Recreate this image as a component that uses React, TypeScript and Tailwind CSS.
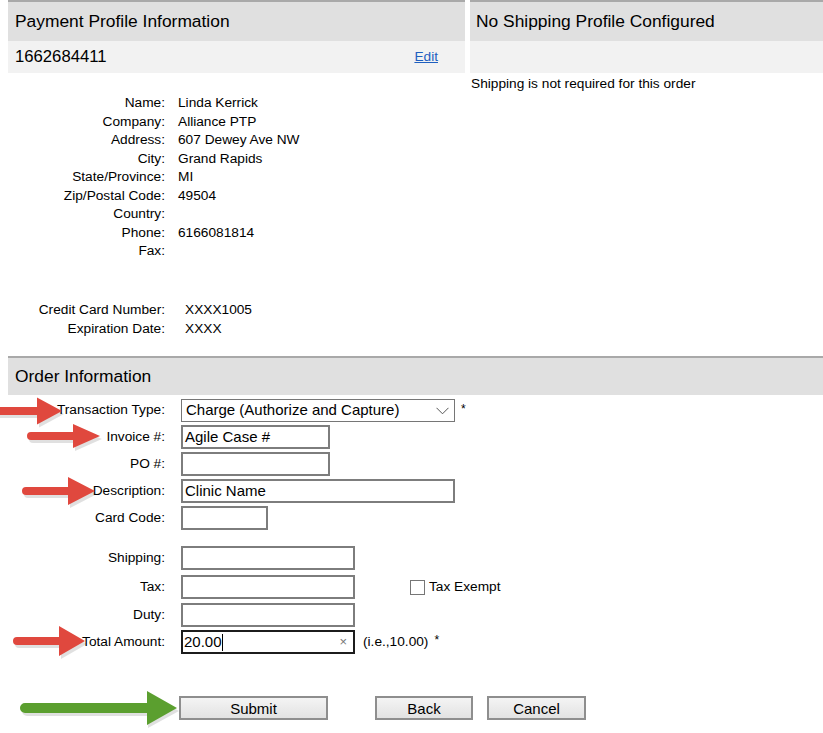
import React from "react";

const profile = [
  ["Name:", "Linda Kerrick"],
  ["Company:", "Alliance PTP"],
  ["Address:", "607 Dewey Ave NW"],
  ["City:", "Grand Rapids"],
  ["State/Province:", "MI"],
  ["Zip/Postal Code:", "49504"],
  ["Country:", ""],
  ["Phone:", "6166081814"],
  ["Fax:", ""],
];

const card = [
  ["Credit Card Number:", "XXXX1005"],
  ["Expiration Date:", "XXXX"],
];

// annotation arrows drawn on top of the screenshot
function arrowPath(x0: number, x1: number, y: number, shaft: number, headLen: number, headH: number) {
  const s = shaft / 2;
  const hx = x1 - headLen;
  return `M${x0 + s} ${y - s} L${hx} ${y - s} L${hx} ${y - headH / 2} L${x1} ${y} L${hx} ${y + headH / 2} L${hx} ${y + s} L${x0 + s} ${y + s} A${s} ${s} 0 0 1 ${x0 + s} ${y - s} Z`;
}

const redArrows = [
  { x0: -6, x1: 62, y: 411, shaft: 8, headLen: 25, headH: 27 },
  { x0: 27, x1: 100, y: 436, shaft: 8, headLen: 27, headH: 24 },
  { x0: 22, x1: 95, y: 491, shaft: 8, headLen: 27, headH: 28 },
  { x0: 13, x1: 85, y: 641, shaft: 8, headLen: 26, headH: 30 },
];

function Arrows() {
  return (
    <svg className="absolute inset-0 pointer-events-none" width={823} height={733}>
      {redArrows.map((a, i) => (
        <g key={i}>
          <path d={arrowPath(a.x0 + 2, a.x1 + 2, a.y + 3, a.shaft, a.headLen, a.headH)} fill="#000" opacity={0.12} />
          <path d={arrowPath(a.x0, a.x1, a.y, a.shaft, a.headLen, a.headH)} fill="#e0483e" />
        </g>
      ))}
      <path d={arrowPath(22, 179, 711, 10, 31, 34)} fill="#000" opacity={0.12} />
      <path d={arrowPath(20, 177, 708, 10, 30, 34)} fill="#5b9f2f" />
    </svg>
  );
}

function Field({ w, value }: { w: string; value?: string }) {
  return (
    <div className={`${w} h-[24px] border-2 border-[#7d7d7d] bg-white flex items-center px-[2px] text-[15px]`}>
      {value}
    </div>
  );
}

function Row({ label, mt, children }: { label: string; mt: string; children: React.ReactNode }) {
  return (
    <div className={`flex items-center ${mt}`}>
      <div className="w-[158px] text-right text-[13.7px] pr-[1px]">{label}</div>
      <div className="ml-[15px] flex items-center">{children}</div>
    </div>
  );
}

function Btn({ w, label }: { w: string; label: string }) {
  return (
    <button className={`${w} h-[24px] border-2 border-[#8e8e8e] bg-gradient-to-b from-[#f4f4f4] to-[#e2e2e2] text-[15px] leading-none`}>
      {label}
    </button>
  );
}

export default function App() {
  return (
    <div className="relative w-[823px] h-[733px] overflow-hidden bg-white text-black font-['Liberation_Sans',Arial,sans-serif] pl-2">
      <div className="flex gap-[5px]">
        <div className="w-[457px] border-t-2 border-[#a9a9a9]">
          <div className="h-[39px] bg-[#e0e0e0] flex items-center pl-[7px] text-[17.4px]">
            Payment Profile Information
          </div>
          <div className="h-[32px] bg-[#f2f2f2] flex items-center justify-between pl-[7px] pr-[27px]">
            <span className="text-[16.7px]">1662684411</span>
            <a href="#" className="text-[13.7px] text-[#1f5fbf] underline">Edit</a>
          </div>
          <div className="mt-[21px] grid grid-cols-[157px_1fr] gap-x-[13px] text-[13.7px] leading-[18.5px]">
            {profile.map(([k, v]) => (
              <React.Fragment key={k}>
                <div className="text-right">{k}</div>
                <div>{v}</div>
              </React.Fragment>
            ))}
          </div>
          <div className="mt-[39px] grid grid-cols-[157px_1fr] gap-x-[20px] text-[13.7px] leading-[19px]">
            {card.map(([k, v]) => (
              <React.Fragment key={k}>
                <div className="text-right">{k}</div>
                <div>{v}</div>
              </React.Fragment>
            ))}
          </div>
        </div>
        <div className="flex-1 border-t-2 border-[#a9a9a9]">
          <div className="h-[39px] bg-[#e0e0e0] flex items-center pl-[6px] text-[17.4px]">
            No Shipping Profile Configured
          </div>
          <div className="h-[32px] bg-[#f2f2f2]" />
          <p className="pl-[1px] mt-[2px] text-[13.7px] leading-[18px]">Shipping is not required for this order</p>
        </div>
      </div>

      <div className="mt-[18.5px] border-t-2 border-[#a9a9a9]">
        <div className="h-[37px] bg-[#e0e0e0] flex items-center pl-[7px] text-[17.4px]">Order Information</div>
      </div>

      <div className="mt-[4px]">
        <Row label="Transaction Type:" mt="mt-0">
          <div className="w-[274px] h-[23px] border border-[#767676] bg-white flex items-center pl-[4px] pr-[4px] text-[15px]">
            <span>Charge (Authorize and Capture)</span>
            <svg className="ml-auto mr-[1px]" width="13" height="8" viewBox="0 0 13 8">
              <path d="M0.5 0.8 L6.5 6.8 L12.5 0.8" fill="none" stroke="#555" strokeWidth="1" />
            </svg>
          </div>
          <span className="ml-[6px] text-[12px] -mt-[4px]">*</span>
        </Row>
        <Row label="Invoice #:" mt="mt-[3px]">
          <Field w="w-[149px]" value="Agile Case #" />
        </Row>
        <Row label="PO #:" mt="mt-[3px]">
          <Field w="w-[149px]" />
        </Row>
        <Row label="Description:" mt="mt-[3px]">
          <Field w="w-[274px]" value="Clinic Name" />
        </Row>
        <Row label="Card Code:" mt="mt-[3px]">
          <Field w="w-[87px]" />
        </Row>
        <Row label="Shipping:" mt="mt-[16px]">
          <Field w="w-[174px]" />
        </Row>
        <Row label="Tax:" mt="mt-[5px]">
          <Field w="w-[174px]" />
          <span className="ml-[55px] w-[15px] h-[15px] border border-[#767676] bg-white" />
          <span className="ml-[4px] text-[13.7px]">Tax Exempt</span>
        </Row>
        <Row label="Duty:" mt="mt-[4px]">
          <Field w="w-[174px]" />
        </Row>
        <Row label="Total Amount:" mt="mt-[3px]">
          <div className="w-[174px] h-[24px] border-2 border-[#1c1c1c] bg-white flex items-center pl-[1px] pr-[6px] text-[15px]">
            <span>20.00</span>
            <span className="w-px h-[17px] bg-black" />
            <span className="ml-auto text-[13px] text-[#777]">×</span>
          </div>
          <span className="ml-[8px] text-[13.7px]">(i.e.,10.00)</span>
          <span className="ml-[6px] text-[12px] -mt-[4px]">*</span>
        </Row>
      </div>

      <div className="mt-[42px] flex items-center pl-[171px]">
        <Btn w="w-[149px]" label="Submit" />
        <div className="ml-[47px]">
          <Btn w="w-[98px]" label="Back" />
        </div>
        <div className="ml-[14px]">
          <Btn w="w-[99px]" label="Cancel" />
        </div>
      </div>

      <Arrows />
    </div>
  );
}
